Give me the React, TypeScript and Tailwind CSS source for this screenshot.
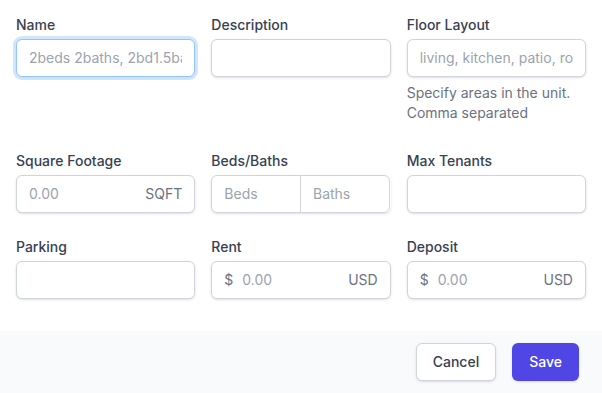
const inputBase =
  "block w-full rounded-md border border-[#d1d5db] bg-white px-3 py-2 text-sm leading-5 text-[#111827] shadow-sm outline-none placeholder:text-[#9ca3af]";

const Label = ({ children }: { children: string }) => (
  <label className="block text-sm leading-5 font-medium text-[#374151]">{children}</label>
);

const Field = ({ label, children }: { label: string; children: React.ReactNode }) => (
  <div>
    <Label>{label}</Label>
    <div className="mt-1">{children}</div>
  </div>
);

const MoneyInput = () => (
  <div className="flex items-center rounded-md border border-[#d1d5db] bg-white px-3 py-2 text-sm leading-5 shadow-sm">
    <span className="text-[#6b7280]">$</span>
    <input
      className="ml-[9px] min-w-0 flex-1 bg-transparent outline-none placeholder:text-[#9ca3af]"
      placeholder="0.00"
    />
    <span className="text-[#6b7280]">USD</span>
  </div>
);

export default function App() {
  return (
    <div className="w-[602px] bg-white font-['Inter',sans-serif]">
      <div className="grid grid-cols-3 gap-x-4 gap-y-6 px-4 pt-[15px] pb-8">
        <Field label="Name">
          <input
            className="block w-full rounded-md border border-[#93c5fd] bg-white px-3 py-2 text-sm leading-5 text-[#111827] shadow-sm outline-none ring-3 ring-[#bfdbfe]/70 placeholder:text-[#9ca3af]"
            placeholder="2beds 2baths, 2bd1.5ba"
          />
        </Field>
        <Field label="Description">
          <input className={inputBase} />
        </Field>
        <div>
          <Label>Floor Layout</Label>
          <div className="mt-1">
            <input className={inputBase} placeholder="living, kitchen, patio, roof" />
          </div>
          <p className="mt-[6px] mb-1 text-sm leading-5 text-[#6b7280]">
            Specify areas in the unit. Comma separated
          </p>
        </div>

        <Field label="Square Footage">
          <div className="flex items-center rounded-md border border-[#d1d5db] bg-white px-3 py-2 text-sm leading-5 shadow-sm">
            <input
              className="min-w-0 flex-1 bg-transparent outline-none placeholder:text-[#9ca3af]"
              placeholder="0.00"
            />
            <span className="text-[#6b7280]">SQFT</span>
          </div>
        </Field>
        <Field label="Beds/Baths">
          <div className="flex rounded-md shadow-sm">
            <input
              className="block w-1/2 min-w-0 rounded-l-md border border-[#d1d5db] bg-white px-3 py-2 text-sm leading-5 outline-none placeholder:text-[#9ca3af]"
              placeholder="Beds"
            />
            <input
              className="-ml-px block w-1/2 min-w-0 rounded-r-md border border-[#d1d5db] bg-white px-3 py-2 text-sm leading-5 outline-none placeholder:text-[#9ca3af]"
              placeholder="Baths"
            />
          </div>
        </Field>
        <Field label="Max Tenants">
          <input className={inputBase} />
        </Field>

        <Field label="Parking">
          <input className={inputBase} />
        </Field>
        <Field label="Rent">
          <MoneyInput />
        </Field>
        <Field label="Deposit">
          <MoneyInput />
        </Field>
      </div>

      <div className="flex justify-end gap-4 bg-[#f9fafb] py-3 pr-[23px]">
        <button className="rounded-md border border-[#d1d5db] bg-white px-4 py-2 text-sm leading-5 font-medium text-[#374151] shadow-sm">
          Cancel
        </button>
        <button className="rounded-md border border-transparent bg-[#4f46e5] px-4 py-2 text-sm leading-5 font-medium text-white shadow-sm">
          Save
        </button>
      </div>
    </div>
  );
}
